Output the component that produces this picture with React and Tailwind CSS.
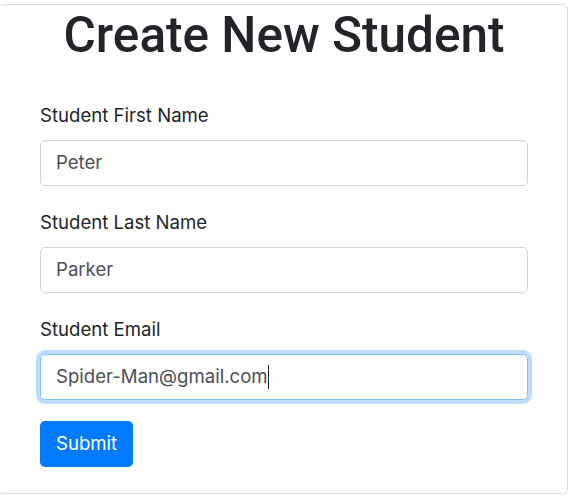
export default function App() {
  const fields = [
    { label: 'Student First Name', value: 'Peter' },
    { label: 'Student Last Name', value: 'Parker' },
    { label: 'Student Email', value: 'Spider-Man@gmail.com', focused: true },
  ]

  return (
    <div
      className="min-h-[498px] bg-white pt-[4px]"
      style={{ fontFamily: 'Inter, "Noto Sans", sans-serif' }}
    >
      <div className="-ml-[2px] w-[570px] h-[490px] rounded-[5px] border border-[#dcdcdc] pl-[41px] pr-[39px] pt-[1px]">
        <h1
          className="text-center text-[49.5px] leading-[58px] font-medium text-[#212529] mb-[37px]"
          style={{ fontFamily: 'Roboto, Inter, sans-serif' }}
        >
          Create New Student
        </h1>
        <form onSubmit={(e) => e.preventDefault()}>
          {fields.map((f, i) => (
            <div key={f.label} className={i === 2 ? 'mb-[21px]' : 'mb-[22px]'}>
              <label className="block text-[18.6px] leading-[29px] text-[#212529] mb-[10px]">
                {f.label}
              </label>
              {f.focused ? (
                <div className="h-[46px] rounded-[5px] border border-[#80bdff] shadow-[0_0_0_4px_rgba(0,123,255,0.25)] px-[15px] flex items-center text-[18.6px] text-[#495057]">
                  <span>{f.value}</span>
                  <span className="inline-block w-px h-[24px] bg-[#212529]" />
                </div>
              ) : (
                <div className="h-[46px] rounded-[5px] border border-[#ced4da] px-[15px] flex items-center text-[18.6px] text-[#495057]">
                  {f.value}
                </div>
              )}
            </div>
          ))}
          <button
            type="submit"
            className="h-[46px] px-[16px] rounded-[5px] bg-[#007bff] text-white text-[18.6px]"
          >
            Submit
          </button>
        </form>
      </div>
    </div>
  )
}
